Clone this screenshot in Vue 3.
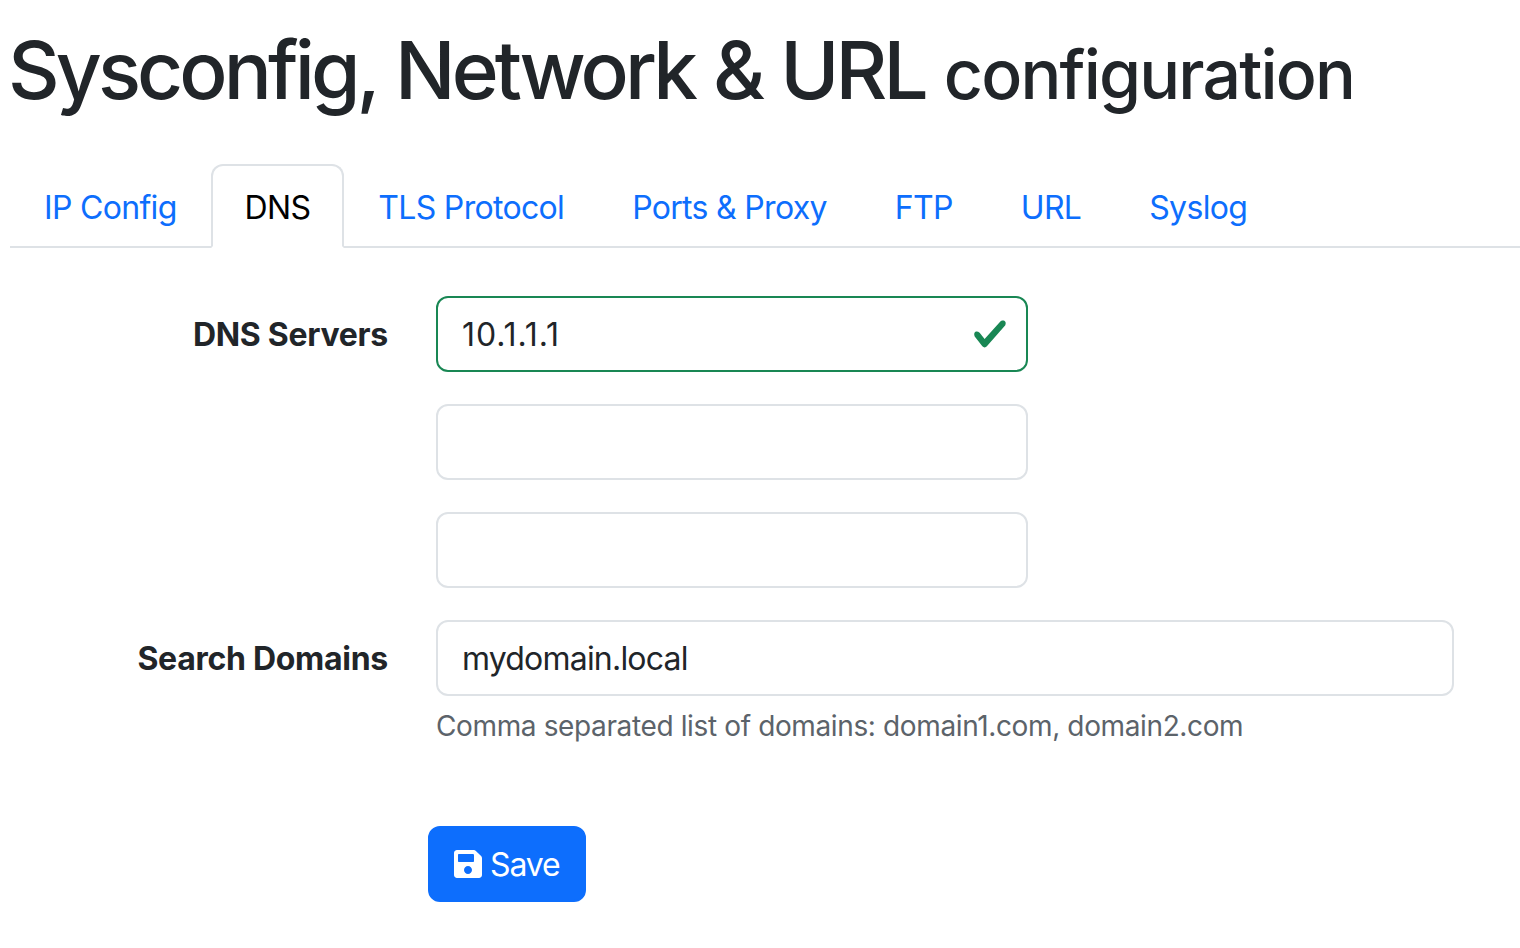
<script setup>
const tabs = ['IP Config', 'DNS', 'TLS Protocol', 'Ports & Proxy', 'FTP', 'URL', 'Syslog']
</script>

<template>
  <main class="page">
    <h1 class="title">Sysconfig, Network &amp; URL <small>configuration</small></h1>
    <nav class="tabs">
      <a v-for="tab in tabs" :key="tab" class="tab" :class="{ active: tab === 'DNS' }">{{ tab }}</a>
    </nav>
    <form class="form">
      <label class="label">DNS Servers</label>
      <div class="stack short">
        <div class="valid-wrap">
          <input class="input valid" value="10.1.1.1" />
          <svg class="check" viewBox="0 0 8 8"><path fill="#198754" d="M2.3 6.73.6 4.53c-.4-1.04.46-1.4 1.1-.8l1.1 1.4 3.4-3.8c.6-.63 1.6-.27 1.2.7l-4 4.6c-.43.5-.8.4-1.1.1z" /></svg>
        </div>
        <input class="input" />
        <input class="input" />
      </div>
      <label class="label">Search Domains</label>
      <div>
        <input class="input" value="mydomain.local" />
        <div class="help">Comma separated list of domains: domain1.com, domain2.com</div>
      </div>
    </form>
    <div class="actions">
      <button type="button" class="btn">
        <svg class="save" viewBox="0 0 448 512"><path fill="currentColor" d="M433.941 129.941l-83.882-83.882A48 48 0 0 0 316.118 32H48C21.49 32 0 53.49 0 80v352c0 26.51 21.49 48 48 48h352c26.51 0 48-21.49 48-48V163.882a48 48 0 0 0-14.059-33.941zM224 416c-35.346 0-64-28.654-64-64 0-35.346 28.654-64 64-64s64 28.654 64 64c0 35.346-28.654 64-64 64zm96-304.52V212c0 6.627-5.373 12-12 12H76c-6.627 0-12-5.373-12-12V108c0-6.627 5.373-12 12-12h228.52c3.183 0 6.235 1.264 8.485 3.515l3.48 3.48A11.996 11.996 0 0 1 320 111.48z" /></svg>
        <span class="btn-text">Save</span>
      </button>
    </div>
  </main>
</template>

<style scoped>
.page {
  padding: 22px 0 0 10px;
  font-family: Inter, "Liberation Sans", sans-serif;
  font-size: 32px;
  line-height: 48px;
  color: #212529;
}
.title {
  margin: 0 0 42px -2px;
  font-size: 80px;
  line-height: 96px;
  font-weight: 500;
  letter-spacing: -3.9px;
  word-spacing: 1.5px;
}
.title small {
  font-size: 68px;
  letter-spacing: -1.85px;
}
.tabs {
  display: flex;
  border-bottom: 2px solid #dee2e6;
  height: 82px;
}
.tab {
  box-sizing: border-box;
  height: 82px;
  padding: 18px 32px 14px;
  border: 2px solid transparent;
  border-radius: 12px 12px 0 0;
  color: #0d6efd;
  letter-spacing: -0.68px;
}
.tab.active {
  color: #000;
  background: #fff;
  border-color: #dee2e6 #dee2e6 #fff;
  height: 84px;
}
.form {
  display: grid;
  grid-template-columns: 378px 1018px;
  column-gap: 48px;
  row-gap: 32px;
  margin-top: 48px;
}
.label {
  text-align: right;
  font-weight: 700;
  padding-top: 15px;
  letter-spacing: -0.28px;
}
.stack {
  display: flex;
  flex-direction: column;
  gap: 32px;
}
.short {
  width: 592px;
}
.valid-wrap {
  position: relative;
}
.input {
  display: block;
  box-sizing: border-box;
  width: 100%;
  height: 76px;
  padding: 12px 24px;
  border: 2px solid #dee2e6;
  border-radius: 12px;
  background: #fff;
  color: #212529;
  font: inherit;
  letter-spacing: -0.8px;
  outline: none;
}
.input.valid {
  border-color: #198754;
  letter-spacing: 0.9px;
}
.check {
  position: absolute;
  right: 20px;
  top: 20px;
  width: 36px;
  height: 36px;
}
.help {
  margin-top: 9px;
  font-size: 28px;
  line-height: 42px;
  color: #5c636a;
  letter-spacing: -0.37px;
}
.actions {
  margin: 79px 0 0 418px;
}
.btn {
  display: inline-flex;
  align-items: center;
  gap: 8px;
  box-sizing: border-box;
  height: 76px;
  padding: 12px 24px;
  border: 2px solid #0d6efd;
  border-radius: 12px;
  background: #0d6efd;
  color: #fff;
  font: inherit;
  letter-spacing: -1.1px;
}
.btn-text {
  padding-top: 2px;
}
.save {
  width: 28px;
  height: 32px;
}
</style>
